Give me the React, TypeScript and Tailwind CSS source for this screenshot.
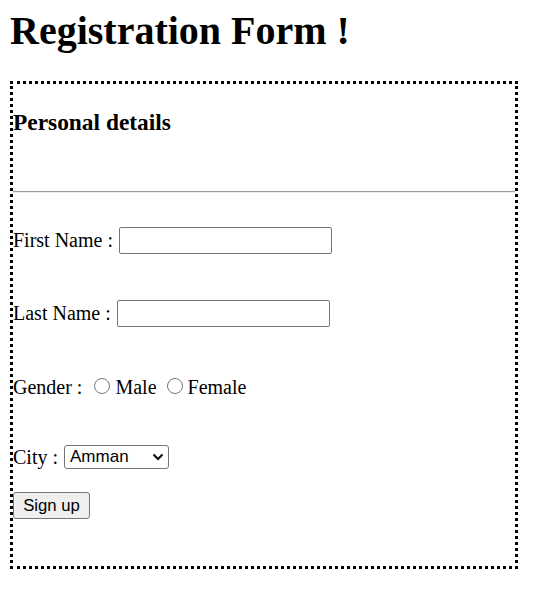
import { useState } from "react";

const serif = "font-['Liberation_Serif','Times_New_Roman',serif]";
const sans = "font-['Liberation_Sans',Arial,sans-serif]";

function TextInput() {
  return (
    <input
      type="text"
      className={`ml-[6px] h-[27px] w-[213px] rounded-[2px] border border-[#767676] bg-white px-[3px] text-[16.7px] outline-none ${sans}`}
    />
  );
}

function Radio({ checked, onChange }: { checked: boolean; onChange: () => void }) {
  return (
    <input
      type="radio"
      name="gender"
      checked={checked}
      onChange={onChange}
      className="m-0 h-[16px] w-[16px] -translate-y-[1px] appearance-none rounded-full border border-[#767676] bg-white checked:border-[4px] checked:border-[#0075ff]"
    />
  );
}

export default function App() {
  const [gender, setGender] = useState("");

  return (
    <div className={`min-h-[607px] bg-white px-[10px] pt-[8px] text-black ${serif}`}>
      <h1 className="text-[40px] font-bold leading-[46px]">Registration Form !</h1>

      <form
        className="mt-[27px] w-[508px] border-[3px] border-dotted border-black pb-[47px]"
        onSubmit={(e) => e.preventDefault()}
      >
        <h3 className="mt-[25px] text-[23.4px] font-bold leading-[27px]">Personal details</h3>

        <hr className="mt-[55px] h-0 border-0 border-t border-b border-t-[#9a9a9a] border-b-[#eeeeee]" />

        <div className="mt-[34px] flex h-[27px] items-center text-[20px] leading-[23px]">
          <span>First Name :</span>
          <TextInput />
        </div>

        <div className="mt-[46px] flex h-[27px] items-center text-[20px] leading-[23px]">
          <span>Last Name :</span>
          <TextInput />
        </div>

        <div className="mt-[46px] flex h-[27px] items-center text-[20px] leading-[23px]">
          <span className="translate-y-[1px]">Gender :</span>
          <span className="ml-[12px] flex items-center">
            <Radio checked={gender === "male"} onChange={() => setGender("male")} />
          </span>
          <span className="ml-[5px] translate-y-[1px]">Male</span>
          <span className="ml-[10px] flex items-center">
            <Radio checked={gender === "female"} onChange={() => setGender("female")} />
          </span>
          <span className="ml-[5px] translate-y-[1px]">Female</span>
        </div>

        <div className="mt-[45px] flex h-[24px] items-center text-[20px] leading-[23px]">
          <span>City :</span>
          <div className="relative ml-[6px]">
            <select
              className={`block h-[24px] w-[105px] appearance-none rounded-[3px] border border-[#767676] bg-white pl-[5px] text-[17px] leading-[20px] outline-none ${sans}`}
              defaultValue="Amman"
            >
              <option>Amman</option>
              <option>Irbid</option>
              <option>Zarqa</option>
              <option>Aqaba</option>
            </select>
            <svg
              className="pointer-events-none absolute right-[5px] top-[8px]"
              width="12"
              height="8"
              viewBox="0 0 12 8"
              fill="none"
            >
              <path d="M1.5 1.5 L6 6 L10.5 1.5" stroke="#000" strokeWidth="2" />
            </svg>
          </div>
        </div>

        <button
          type="submit"
          className={`mt-[23px] block h-[27px] w-[77px] rounded-[3px] border border-[#767676] bg-[#efefef] text-[16.7px] leading-[20px] ${sans}`}
        >
          Sign up
        </button>
      </form>
    </div>
  );
}
